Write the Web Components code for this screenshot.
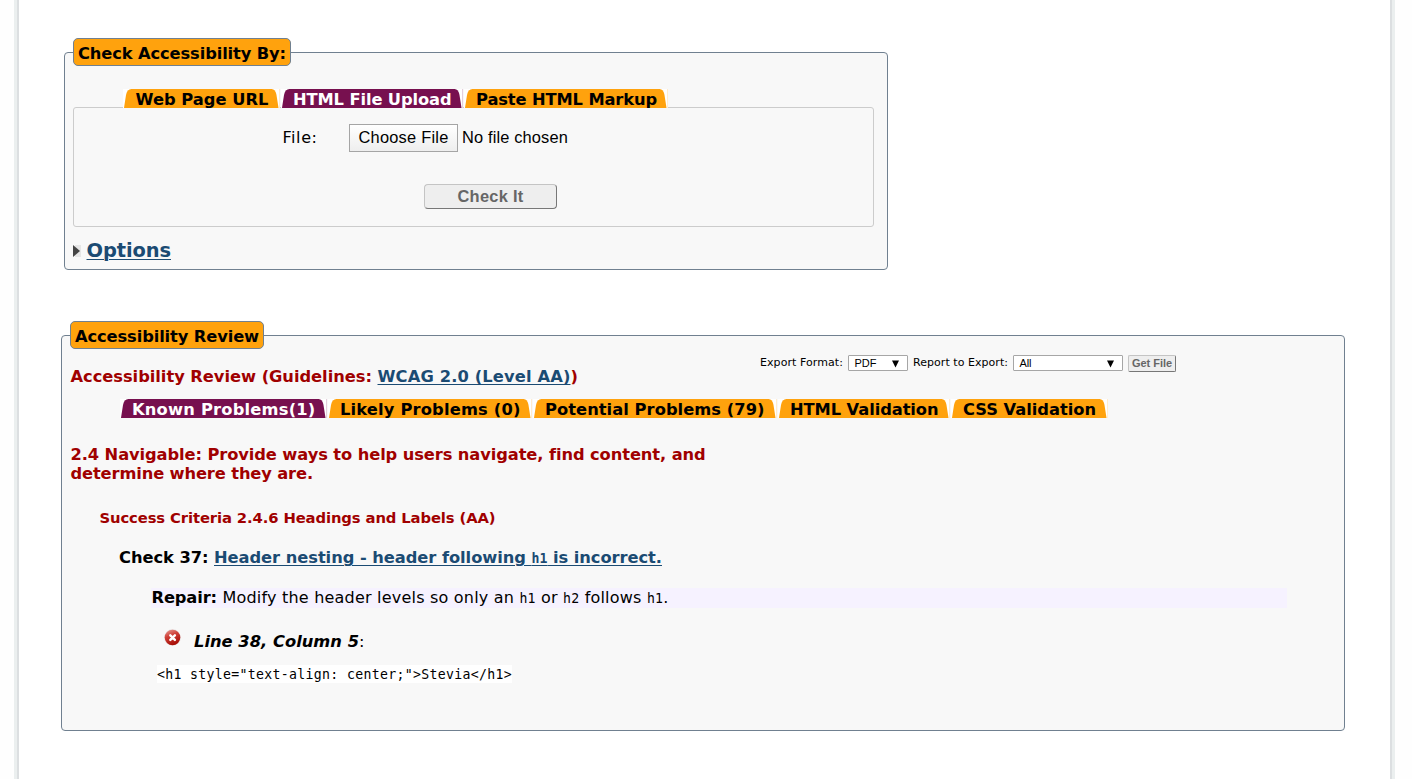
<!DOCTYPE html>
<html lang="en">
<head>
<meta charset="utf-8">
<title>Accessibility Review</title>
<style>
html, body { margin: 0; height: 779px; overflow: hidden; background: #fefefe; }
body { font-family: "DejaVu Sans", sans-serif; color: #000; }
</style>
</head>
<body>
<checker-page></checker-page>

<script>
/* Text run set to a fixed measure: spreads the difference over its letters. */
class FitText extends HTMLElement {
  connectedCallback() {
    if (this.shadowRoot) return;
    this.attachShadow({ mode: 'open' }).innerHTML =
      '<style>:host{display:inline-block;white-space:pre;flex:none}</style><span><slot></slot></span>';
    const w = parseFloat(this.getAttribute('w'));
    const box = this.shadowRoot.querySelector('span');
    const n = this.textContent.length;
    const natural = box.getBoundingClientRect().width;
    this.style.letterSpacing = ((w - natural) / n).toFixed(4) + 'px';
    this.style.width = w + 'px';
  }
}

/* Bordered group with a highlighted caption on its top edge. */
class TitledPanel extends HTMLElement {
  connectedCallback() {
    if (this.shadowRoot) return;
    this.attachShadow({ mode: 'open' }).innerHTML = `
      <style>
        :host { display: block; box-sizing: border-box; border: 1px solid #708090; border-radius: 4px; background: #f8f8f8; }
        .cap { display: flex; align-items: flex-start; justify-content: center; box-sizing: border-box; height: 28px; width: max-content;
          margin-top: -15px; margin-left: 8px; padding: 2px 4px 0; border: 1px solid #708090; border-radius: 5px; background: #ffa20d;
          font-weight: bold; font-size: 16.3px; line-height: 26px; }
      </style>
      <div class="cap"><slot name="caption"></slot></div>
      <slot></slot>`;
  }
}

/* Slanted tab with white outer corners. */
class PageTab extends HTMLElement {
  connectedCallback() {
    if (this.shadowRoot) return;
    const w = +this.getAttribute('width');
    const on = this.hasAttribute('active');
    const fill = on ? '#77104f' : '#ffa20d';
    this.attachShadow({ mode: 'open' }).innerHTML = `
      <style>
        :host { display: grid; width: ${w}px; height: 19px; flex: none; overflow: hidden; }
        svg, div { grid-area: 1 / 1; }
        svg { display: block; }
        div { padding-left: ${this.getAttribute('pad') || 12}px; font-weight: bold; font-size: 16.3px; line-height: 21px; height: 19px; color: ${on ? '#fff' : '#000'}; }
      </style>
      <svg width="${w}" height="19" viewBox="0 0 ${w} 19">
        <rect width="${w}" height="19" fill="#fff"/>
        <path d="M1 19 L3 6 Q4 0 8.5 0 H${w - 8.5} Q${w - 4.5} 0 ${w - 3.5} 6 L${w - 1.5} 19 Z" fill="${fill}"/>
        <path d="M${w - .5} 0 V19" stroke="${fill}" stroke-opacity=".2"/>
      </svg>
      <div><slot></slot></div>`;
  }
}

/* Drop-down field. */
class PickList extends HTMLElement {
  connectedCallback() {
    if (this.shadowRoot) return;
    this.attachShadow({ mode: 'open' }).innerHTML = `
      <style>
        :host { display: flex; box-sizing: border-box; height: 16px; border: 1px solid #a6a6a6; border-radius: 1px; background: #fff;
          align-items: center; justify-content: space-between; padding: 0 8px 0 5.5px; font: 11px "Liberation Sans", Arial, sans-serif; }
        svg { display: block; margin-top: 1px; }
      </style>
      <slot></slot>
      <svg width="7" height="8" viewBox="0 0 7 8"><path d="M0 .5 H7 L3.5 7.5 Z" fill="#000"/></svg>`;
  }
}

/* Push button; its corner radius comes from --r. */
class PushButton extends HTMLElement {
  connectedCallback() {
    if (this.shadowRoot) return;
    this.attachShadow({ mode: 'open' }).innerHTML = `
      <style>
        :host { display: flex; flex: none; box-sizing: border-box; align-items: center; justify-content: center;
          border: 1px solid; border-color: #c4c4c4 #777 #777 #c4c4c4; border-radius: var(--r, 4px); background: #eee; color: #666;
          font-family: "Liberation Sans", Arial, sans-serif; font-weight: bold; }
      </style><slot></slot>`;
  }
}

class ErrorIcon extends HTMLElement {
  connectedCallback() {
    if (this.shadowRoot) return;
    this.attachShadow({ mode: 'open' }).innerHTML = `
      <style>:host { display: block; width: 17px; height: 17px; flex: none; } svg { display: block; }</style>
      <svg width="17" height="17" viewBox="0 0 17 17">
        <defs><linearGradient id="g" x1="0" y1="0" x2=".4" y2="1">
          <stop offset="0" stop-color="#e9a29a"/><stop offset=".45" stop-color="#cf4038"/><stop offset="1" stop-color="#a80f08"/>
        </linearGradient></defs>
        <circle cx="8.5" cy="8.5" r="8.3" fill="#e6dcdc"/>
        <circle cx="8.5" cy="8.5" r="7.8" fill="url(#g)"/>
        <path d="M6.3 6.3 L10.9 10.9 M10.9 6.3 L6.3 10.9" stroke="#fff" stroke-width="2.4" stroke-linecap="round"/>
      </svg>`;
  }
}

class CheckForm extends HTMLElement {
  connectedCallback() {
    if (this.shadowRoot) return;
    this.attachShadow({ mode: 'open' }).innerHTML = `
      <style>
        :host { display: block; margin: 52px 0 0 45px; width: 824px; }
        titled-panel { height: 218px; }
        .tabs { display: flex; gap: 1px; margin: 23px 0 0 58px; position: relative; z-index: 1; }
        .box { box-sizing: border-box; width: 801px; height: 120px; margin: -1px 0 0 8px; border: 1px solid #ccc; border-radius: 3px; }
        .file { display: flex; align-items: center; height: 28px; margin: 16px 0 0 208.5px; font-size: 16px; }
        .file > fit-text { margin-top: -2px; }
        .pick { display: flex; align-items: center; justify-content: center; box-sizing: border-box; width: 109px; height: 28px; margin-left: 31.5px;
          border: 1px solid #a5a5a5; background: linear-gradient(#fff, #eee); }
        .pick fit-text { margin-top: -2px; }
        .arial { font-family: "Liberation Sans", Arial, sans-serif; font-size: 16.4px; }
        .none { margin-left: 4px; }
        push-button { width: 133px; height: 25px; margin: 32px 0 0 350px; font-size: 16.4px; }
        .options { display: flex; align-items: center; height: 26px; margin: 10px 0 0 8px; }
        .link { margin: 0 0 0 5.5px; font-size: 19.4px; font-weight: bold; color: #1b4b73; text-decoration: underline; text-decoration-thickness: 1px; text-underline-offset: 2px; }
        svg { display: block; margin-top: 2px; }
      </style>
      <titled-panel>
        <fit-text slot="caption" w="208">Check Accessibility By:</fit-text>
        <div class="tabs">
          <page-tab width="157" pad="12.5"><fit-text w="133">Web Page URL</fit-text></page-tab>
          <page-tab width="182" active><fit-text w="158.5">HTML File Upload</fit-text></page-tab>
          <page-tab width="204"><fit-text w="181">Paste HTML Markup</fit-text></page-tab>
        </div>
        <div class="box">
          <div class="file"><fit-text w="35">File:</fit-text>
            <div class="pick arial"><fit-text w="90">Choose File</fit-text></div>
            <fit-text class="arial none" w="106">No file chosen</fit-text></div>
          <push-button><fit-text w="66">Check It</fit-text></push-button>
        </div>
        <div class="options">
          <svg width="8" height="12" viewBox="0 0 8 12"><rect x="2" width="6" height="12" fill="#e6e6e6"/><path d="M0 0 L7 6 L0 12 Z" fill="#444"/></svg>
          <fit-text class="link" w="84.5">Options</fit-text>
        </div>
      </titled-panel>`;
  }
}

class ReviewReport extends HTMLElement {
  connectedCallback() {
    if (this.shadowRoot) return;
    this.attachShadow({ mode: 'open' }).innerHTML = `
      <style>
        :host { display: block; margin: 65px 0 0 42px; width: 1284px; }
        titled-panel { height: 396px; }
        .head { display: flex; height: 35px; margin: 5px 0 0 8px; }
        .title { margin-top: 13px; height: 20px; line-height: 20px; width: 690px; display: flex; }
        .title fit-text:first-child { margin-left: .5px; }
        .red { color: #a00000; font-weight: bold; font-size: 16.3px; }
        .export { display: flex; font-size: 11px; line-height: 16px; margin-top: 1px; }
        .link { color: #1b4b73; text-decoration: underline; text-decoration-thickness: 1px; text-underline-offset: 2px; font-weight: bold; }
        .export push-button { width: 48px; height: 17px; margin-left: 5px; font-size: 11px; line-height: 13px; padding-bottom: 1px; --r: 2px; }
        .tabs { display: flex; gap: 1px; margin: 10px 0 0 58px; }
        .guide { margin: 27px 0 0 8.5px; line-height: 19px; }
        .guide fit-text { vertical-align: top; }
        .line { display: flex; height: 20px; line-height: 20px; font-size: 16.3px; }
        .criteria { margin: 25px 0 0 37.5px; color: #a00000; font-weight: bold; font-size: 14.8px; }
        .check { margin: 20px 0 0 57px; font-weight: bold; }
        .repair { margin: 20px 57px 0 89px; padding-left: .5px; background: #f6f2ff; font-size: 16px; }
        code { font-family: "DejaVu Sans Mono", monospace; font-size: 13.2px; line-height: 1; }
        .where { margin: 22px 0 0 102px; }
        .where fit-text { padding-top: 2px; }
        .where i { font-weight: bold; margin-left: 13px; }
        .where error-icon { margin-top: -1px; }
        .src { margin: 15px 0 0 95px; width: 355px; height: 18px; background: #fff; display: flex; }
        .src code { line-height: 19px; }
      </style>
      <titled-panel>
        <fit-text slot="caption" w="184">Accessibility Review</fit-text>
        <div class="head">
          <div class="title red"><fit-text w="307">Accessibility Review (Guidelines: </fit-text><fit-text class="link" w="193">WCAG 2.0 (Level AA)</fit-text><fit-text w="8">)</fit-text></div>
          <div class="export">
            <fit-text w="83">Export Format:</fit-text>
            <pick-list style="width:60px;margin-left:5px"><fit-text w="22">PDF</fit-text></pick-list>
            <fit-text style="margin-left:5px" w="95">Report to Export:</fit-text>
            <pick-list style="width:110px;margin-left:5px"><fit-text w="12">All</fit-text></pick-list>
            <push-button><fit-text w="40">Get File</fit-text></push-button>
          </div>
        </div>
        <div class="tabs">
          <page-tab width="207" active><fit-text w="183.5">Known Problems(1)</fit-text></page-tab>
          <page-tab width="204"><fit-text w="180.5">Likely Problems (0)</fit-text></page-tab>
          <page-tab width="244"><fit-text w="219.5">Potential Problems (79)</fit-text></page-tab>
          <page-tab width="172"><fit-text w="148.5">HTML Validation</fit-text></page-tab>
          <page-tab width="157"><fit-text w="133">CSS Validation</fit-text></page-tab>
        </div>
        <div class="guide red"><fit-text w="634.5">2.4 Navigable: Provide ways to help users navigate, find content, and</fit-text><br><fit-text w="242.5">determine where they are.</fit-text></div>
        <div class="line criteria"><fit-text w="396">Success Criteria 2.4.6 Headings and Labels (AA)</fit-text></div>
        <div class="line check"><fit-text w="95">Check 37: </fit-text><fit-text class="link" w="448">Header nesting - header following <code>h1</code> is incorrect.</fit-text></div>
        <div class="line repair"><fit-text w="71" style="font-weight:bold;font-size:16.3px">Repair: </fit-text><fit-text w="446">Modify the header levels so only an <code>h1</code> or <code>h2</code> follows <code>h1</code>.</fit-text></div>
        <div class="line where"><error-icon></error-icon><i><fit-text w="165">Line 38, Column 5</fit-text></i><fit-text w="7">:</fit-text></div>
        <div class="src"><code><fit-text w="355">&lt;h1 style="text-align: center;"&gt;Stevia&lt;/h1&gt;</fit-text></code></div>
      </titled-panel>`;
  }
}

class CheckerPage extends HTMLElement {
  connectedCallback() {
    if (this.shadowRoot) return;
    this.attachShadow({ mode: 'open' }).innerHTML = `
      <style>
        :host { display: grid; grid-template-columns: 3px 2px 1371px 2px 3px; height: 779px; margin-left: 14px; }
        .outer { background: #ebefef; }
        .inner { background: #dcdfe1; }
        main { display: flow-root; background: #fff; }
      </style>
      <div class="outer"></div><div class="inner"></div>
      <main><check-form></check-form><review-report></review-report></main>
      <div class="inner"></div><div class="outer"></div>`;
  }
}

customElements.define('titled-panel', TitledPanel);
customElements.define('page-tab', PageTab);
customElements.define('pick-list', PickList);
customElements.define('push-button', PushButton);
customElements.define('error-icon', ErrorIcon);
customElements.define('check-form', CheckForm);
customElements.define('review-report', ReviewReport);
customElements.define('checker-page', CheckerPage);
customElements.define('fit-text', FitText);
</script>
</body>
</html>
